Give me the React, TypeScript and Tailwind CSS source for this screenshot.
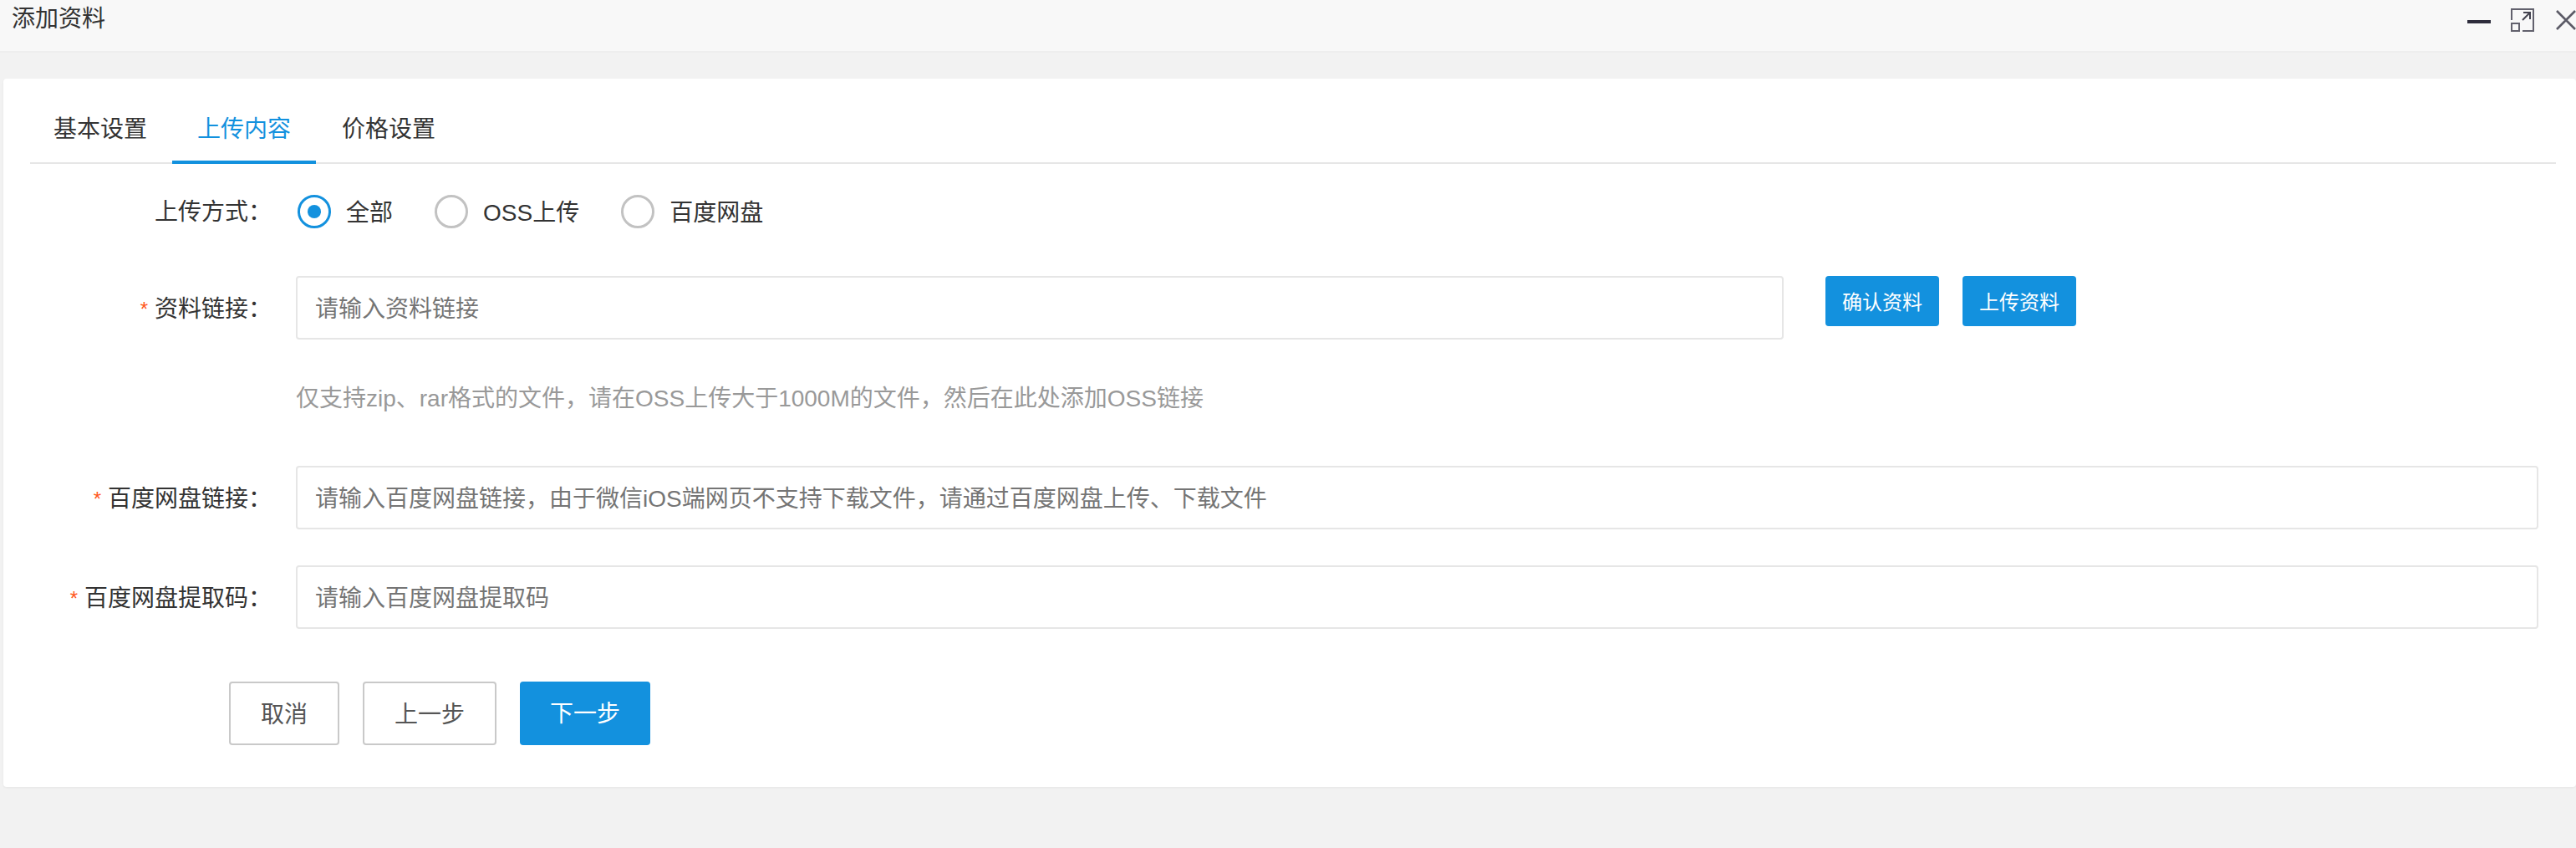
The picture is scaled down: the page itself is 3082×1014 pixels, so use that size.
const BLUE = "bg-[#1391de]";

function Radio({ label, checked }: { label: string; checked?: boolean }) {
  return (
    <label className="flex items-center">
      <span
        className={
          checked
            ? "flex h-10 w-10 items-center justify-center rounded-full border-[3px] border-[#1391de] bg-white"
            : "flex h-10 w-10 items-center justify-center rounded-full border-[3px] border-[#c2c2c2] bg-white"
        }
      >
        {checked && <span className="h-4 w-4 rounded-full bg-[#1391de]" />}
      </span>
      <span className="ml-[18px] pt-[3px] text-[28px] leading-10 text-[#333]">{label}</span>
    </label>
  );
}

function Field({
  label,
  required,
  children,
  className,
}: {
  label: string;
  required?: boolean;
  children: React.ReactNode;
  className?: string;
}) {
  return (
    <div className={"flex items-start " + (className ?? "")}>
      <div className="flex h-20 w-[289px] shrink-0 items-center justify-end text-[28px] text-[#333]">
        {required && <span className="mr-2 text-[24px] text-[#ff5722]">*</span>}
        <span>{label}：</span>
      </div>
      <div className="ml-[29px] min-w-0 flex-1">{children}</div>
    </div>
  );
}

function TextInput({ placeholder, className }: { placeholder: string; className?: string }) {
  return (
    <input
      readOnly
      placeholder={placeholder}
      className={
        "h-[76px] rounded-[4px] border-2 border-[#e6e6e6] bg-white px-[21px] pt-1 text-[28px] outline-none placeholder:text-[#757575] " +
        (className ?? "w-full")
      }
    />
  );
}

export default function App() {
  return (
    <div
      className="h-[1014px] overflow-hidden bg-[#f2f2f2]"
      style={{ fontFamily: '"Liberation Sans", "Noto Sans CJK SC", sans-serif' }}
    >
      <header className="relative h-[63px] border-b-2 border-[#eeeeee] bg-[#f8f8f8] pl-[14px] pt-[5px] text-[28px] leading-[36px] text-[#333]">
        添加资料
        <div className="absolute right-0 top-0 flex h-[60px]">
          <span className="absolute right-[102px] top-[24px] h-1 w-7 bg-[#2e2d3c]" />
          <svg className="absolute right-[50px] top-[10px]" width="28" height="28" viewBox="0 0 28 28" fill="none" stroke="#62616d" strokeWidth="2">
            <path d="M1 14V1h26v26H14" />
            <path d="M1 18h9v9H1z" />
            <path d="M14 14 23 5M15 5h8v8" stroke="#44434f" />
          </svg>
          <svg className="absolute right-0 top-[12px]" width="24" height="24" viewBox="0 0 24 24" fill="none" stroke="#5b5a66" strokeWidth="2.6">
            <path d="M1 1l22 22M23 1 1 23" />
          </svg>
        </div>
      </header>

      <main className="ml-1 mt-[31px] h-[847px] rounded-[4px] bg-white pl-[32px] pr-[24px] shadow-[0_1px_3px_rgba(0,0,0,0.06)]">
        <nav className="flex h-[102px] items-end border-b-2 border-[#e6e6e6]">
          <span className="-mb-[2px] h-[62px] pl-[28px] pr-[30px] text-[28px] leading-[42px] text-[#333]">基本设置</span>
          <span className="-mb-[2px] h-[62px] border-b-4 border-[#1391de] px-[30px] text-[28px] leading-[42px] text-[#1391de]">上传内容</span>
          <span className="-mb-[2px] h-[62px] px-[31px] text-[28px] leading-[42px] text-[#333]">价格设置</span>
        </nav>

        <div className="mt-[37px] flex h-10 items-center">
          <div className="w-[289px] pt-[2px] text-right text-[28px] text-[#333]">上传方式：</div>
          <div className="ml-[31px] flex gap-[50px]">
            <Radio label="全部" checked />
            <Radio label="OSS上传" />
            <Radio label="百度网盘" />
          </div>
        </div>

        <Field label="资料链接" required className="mt-[57px] pr-[21px]">
          <div className="flex items-start">
            <TextInput placeholder="请输入资料链接" className="w-[1780px]" />
            <button className={`ml-[50px] h-[60px] w-[136px] rounded-[4px] ${BLUE} pt-[3px] text-[24px] text-white`}>确认资料</button>
            <button className={`ml-7 h-[60px] w-[136px] rounded-[4px] ${BLUE} pt-[3px] text-[24px] text-white`}>上传资料</button>
          </div>
          <p className="mt-[53px] text-[28px] leading-9 text-[#999]">
            仅支持zip、rar格式的文件，请在OSS上传大于1000M的文件，然后在此处添加OSS链接
          </p>
        </Field>

        <Field label="百度网盘链接" required className="mt-[62px] pr-[21px]">
          <TextInput placeholder="请输入百度网盘链接，由于微信iOS端网页不支持下载文件，请通过百度网盘上传、下载文件" />
        </Field>

        <Field label="百度网盘提取码" required className="mt-[39px] pr-[21px]">
          <TextInput placeholder="请输入百度网盘提取码" />
        </Field>

        <div className="ml-[238px] mt-[59px] flex">
          <button className="h-[76px] w-[132px] rounded-[4px] border-2 border-[#c9c9c9] bg-white pt-[3px] text-[28px] text-[#555]">取消</button>
          <button className="ml-7 h-[76px] w-[160px] rounded-[4px] border-2 border-[#c9c9c9] bg-white pt-[3px] text-[28px] text-[#555]">上一步</button>
          <button className={`ml-7 h-[76px] w-[156px] rounded-[4px] ${BLUE} pt-[1px] text-[28px] text-white`}>下一步</button>
        </div>
      </main>
    </div>
  );
}
